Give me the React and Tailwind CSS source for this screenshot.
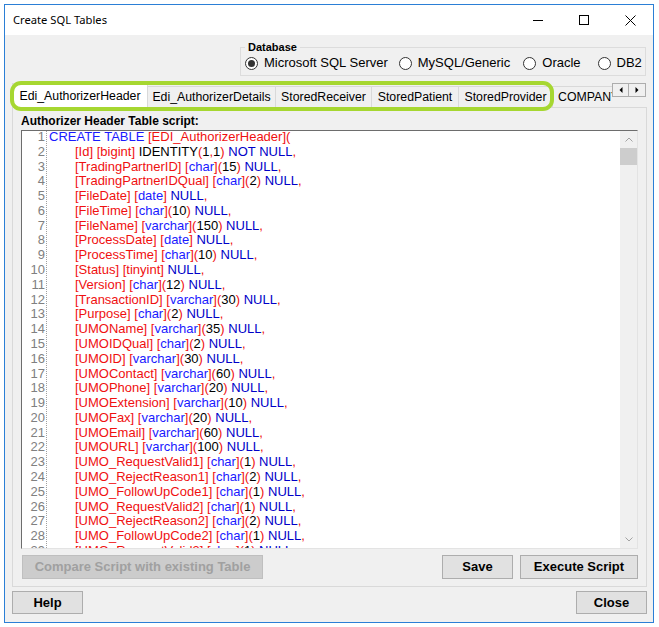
import React from "react";

const LINES = [
  "CREATE TABLE [EDI_AuthorizerHeader](",
  "\t[Id] [bigint] IDENTITY(1,1) NOT NULL,",
  "\t[TradingPartnerID] [char](15) NULL,",
  "\t[TradingPartnerIDQual] [char](2) NULL,",
  "\t[FileDate] [date] NULL,",
  "\t[FileTime] [char](10) NULL,",
  "\t[FileName] [varchar](150) NULL,",
  "\t[ProcessDate] [date] NULL,",
  "\t[ProcessTime] [char](10) NULL,",
  "\t[Status] [tinyint] NULL,",
  "\t[Version] [char](12) NULL,",
  "\t[TransactionID] [varchar](30) NULL,",
  "\t[Purpose] [char](2) NULL,",
  "\t[UMOName] [varchar](35) NULL,",
  "\t[UMOIDQual] [char](2) NULL,",
  "\t[UMOID] [varchar](30) NULL,",
  "\t[UMOContact] [varchar](60) NULL,",
  "\t[UMOPhone] [varchar](20) NULL,",
  "\t[UMOExtension] [varchar](10) NULL,",
  "\t[UMOFax] [varchar](20) NULL,",
  "\t[UMOEmail] [varchar](60) NULL,",
  "\t[UMOURL] [varchar](100) NULL,",
  "\t[UMO_RequestValid1] [char](1) NULL,",
  "\t[UMO_RejectReason1] [char](2) NULL,",
  "\t[UMO_FollowUpCode1] [char](1) NULL,",
  "\t[UMO_RequestValid2] [char](1) NULL,",
  "\t[UMO_RejectReason2] [char](2) NULL,",
  "\t[UMO_FollowUpCode2] [char](1) NULL,",
  "\t[UMO_RequestValid3] [char](1) NULL,",
];

const TYPES = new Set(["char", "varchar", "date"]);
const KW1 = new Set(["CREATE", "TABLE"]);
const KW2 = new Set(["NOT", "NULL"]);

const COLORS = {
  r: "text-[#f01010]",
  t: "text-[#1a1aff]",
  n: "text-[#0000c8]",
  k: "text-black",
};

function tokenize(s) {
  const out = [];
  const re = /\[[^\]]*\]|[(),]|\d+|[A-Za-z_]+|\s+/g;
  let m;
  while ((m = re.exec(s))) {
    const t = m[0];
    if (t[0] === "[") {
      const w = t.slice(1, -1);
      if (TYPES.has(w)) {
        out.push(["r", "["], ["t", w], ["r", "]"]);
      } else out.push(["r", t]);
    } else if (/^[(),]$/.test(t)) out.push(["r", t]);
    else if (KW1.has(t)) out.push(["t", t]);
    else if (KW2.has(t)) out.push(["n", t]);
    else out.push(["k", t]);
  }
  return out;
}

function Radio({ checked, label, className = "" }) {
  return (
    <div className={"flex items-center " + className}>
      <div className="w-[13px] h-[13px] rounded-full border border-[#333333] bg-white flex items-center justify-center">
        {checked && <div className="w-[7px] h-[7px] rounded-full bg-[#333333]" />}
      </div>
      <span className="ml-[6px] text-[13px] leading-[16px] text-black">{label}</span>
    </div>
  );
}

function Tab({ label, w, selected }) {
  return selected ? (
    <div
      className={
        "h-[25px] shrink-0 bg-white border-l border-t border-r border-[#d9d9d9] -mb-[1px] relative z-10 flex items-center justify-center text-[12.3px] text-black " +
        w
      }
    >
      {label}
    </div>
  ) : (
    <div
      className={
        "h-[21px] shrink-0 bg-[#f0f0f0] border-t border-r border-[#d9d9d9] flex items-center justify-center text-[12.3px] text-black whitespace-nowrap " +
        w
      }
    >
      {label}
    </div>
  );
}

function Btn({ children, w, disabled }) {
  return (
    <div
      className={
        "h-[24px] flex items-center justify-center text-[13px] font-bold border " +
        (disabled
          ? "bg-[#cccccc] border-[#bfbfbf] text-[#a0a0a0] "
          : "bg-[#e1e1e1] border-[#adadad] text-black ") +
        w
      }
    >
      {children}
    </div>
  );
}

export default function App() {
  return (
    <div
      className="w-[659px] h-[627px] bg-white pt-[4px] pl-[4px] overflow-hidden"
      style={{ fontFamily: '"Liberation Sans", Arial, sans-serif' }}
    >
      <div className="w-[650px] h-[619px] border border-[#2b7fd6] flex flex-col">
        {/* Title bar */}
        <div className="h-[30px] bg-white flex items-center shrink-0">
          <span
            className="pl-[8px] text-[11.2px] text-black flex-1"
            style={{ fontFamily: '"Segoe UI", "Noto Sans", sans-serif' }}
          >
            Create SQL Tables
          </span>
          <div className="flex h-full">
            <div className="w-[46px] h-full flex items-center justify-center">
              <svg width="10" height="10" viewBox="0 0 10 10">
                <line x1="0" y1="5.5" x2="10" y2="5.5" stroke="#000" strokeWidth="1" />
              </svg>
            </div>
            <div className="w-[46px] h-full flex items-center justify-center">
              <svg width="10" height="10" viewBox="0 0 10 10">
                <rect x="0.5" y="0.5" width="9" height="9" fill="none" stroke="#000" strokeWidth="1" />
              </svg>
            </div>
            <div className="w-[46px] h-full flex items-center justify-center">
              <svg width="11" height="11" viewBox="0 0 11 11">
                <line x1="0.5" y1="0.5" x2="10.5" y2="10.5" stroke="#000" strokeWidth="1" />
                <line x1="10.5" y1="0.5" x2="0.5" y2="10.5" stroke="#000" strokeWidth="1" />
              </svg>
            </div>
          </div>
        </div>

        {/* Body */}
        <div className="flex-1 bg-[#f0f0f0] flex flex-col pl-[7px] pr-[6px]">
          {/* Database group */}
          <fieldset className="mt-[6px] self-end mr-[1px] w-[406px] h-[35px] border border-[#dcdcdc] pl-[4px]">
            <legend className="ml-[0px] px-[3px] text-[11px] leading-[13px] font-bold text-black">
              Database
            </legend>
            <div className="flex items-center h-[16px] mt-[1px]">
              <Radio checked label="Microsoft SQL Server" />
              <Radio label="MySQL/Generic" className="ml-[11px]" />
              <Radio label="Oracle" className="ml-[13px]" />
              <Radio label="DB2" className="ml-[17px]" />
            </div>
          </fieldset>

          {/* Tab strip */}
          <div className="relative mt-[6px] h-[25px] flex items-end shrink-0">
            <div className="w-[600px] h-full flex items-end overflow-hidden">
              <Tab label="Edi_AuthorizerHeader" w="w-[136px]" selected />
              <Tab label="Edi_AuthorizerDetails" w="w-[128px]" />
              <Tab label="StoredReceiver" w="w-[96px]" />
              <Tab label="StoredPatient" w="w-[87px]" />
              <Tab label="StoredProvider" w="w-[94px]" />
              <div className="h-[21px] shrink-0 w-[120px] bg-[#f0f0f0] border-t border-[#d9d9d9] flex items-center pl-[5px] text-[12.3px] text-black whitespace-nowrap">
                COMPANY
              </div>
            </div>
            <div className="self-start flex mt-[1px]">
              <div className="w-[17px] h-[14px] border border-[#adadad] bg-[#f0f0f0] flex items-center justify-center">
                <svg width="4" height="6" viewBox="0 0 4 6">
                  <polygon points="3.5,0 0.5,3 3.5,6" fill="#000" />
                </svg>
              </div>
              <div className="w-[17px] h-[14px] border border-l-0 border-[#adadad] bg-[#f0f0f0] flex items-center justify-center">
                <svg width="4" height="6" viewBox="0 0 4 6">
                  <polygon points="0.5,0 3.5,3 0.5,6" fill="#000" />
                </svg>
              </div>
            </div>
            {/* green annotation outline */}
            <div className="absolute left-[-2px] top-[-1px] w-[544px] h-[30px] border-4 border-[#a6d731] rounded-[11px] pointer-events-none z-20" />
          </div>

          {/* Tab panel */}
          <div className="h-[480px] border border-[#d9d9d9] bg-[#f0f0f0] flex flex-col pl-[8px] pr-[8px] pt-[6px] shrink-0">
            <div className="text-[12px] leading-[14px] font-bold text-black">
              Authorizer Header Table script:
            </div>
            <div className="mt-[2px] w-[617px] h-[419px] bg-white border-t border-l border-[#6d6d6d] border-r border-b border-r-[#e3e3e3] border-b-[#e3e3e3] flex overflow-hidden">
              {/* gutter */}
              <div className="w-[25px] shrink-0 border-r border-dotted border-[#a0a0a0] flex flex-col items-end pr-[1px] -mt-[1px]">
                {LINES.map((_, i) => (
                  <div key={i} className="text-[13px] leading-[14.78px] text-[#808080]">
                    {i + 1}
                  </div>
                ))}
              </div>
              {/* code */}
              <div className="flex-1 pl-[2px] flex flex-col overflow-hidden -mt-[1px]">
                {LINES.map((line, i) => {
                  const indent = line.startsWith("\t");
                  const toks = tokenize(indent ? line.slice(1) : line);
                  return (
                    <div
                      key={i}
                      className={
                        "text-[13px] leading-[14.78px] whitespace-pre " +
                        (indent ? "pl-[26px]" : "")
                      }
                    >
                      {toks.map(([c, t], j) => (
                        <span key={j} className={COLORS[c]}>
                          {t}
                        </span>
                      ))}
                    </div>
                  );
                })}
              </div>
              {/* scrollbar */}
              <div className="w-[17px] shrink-0 bg-[#f0f0f0] flex flex-col">
                <div className="h-[17px] flex items-center justify-center">
                  <svg width="8" height="5" viewBox="0 0 8 5">
                    <polyline points="0.5,4.5 4,1 7.5,4.5" fill="none" stroke="#a3a3a3" strokeWidth="1" />
                  </svg>
                </div>
                <div className="h-[17px] bg-[#cdcdcd]" />
                <div className="flex-1" />
                <div className="h-[17px] flex items-center justify-center">
                  <svg width="8" height="5" viewBox="0 0 8 5">
                    <polyline points="0.5,0.5 4,4 7.5,0.5" fill="none" stroke="#a3a3a3" strokeWidth="1" />
                  </svg>
                </div>
              </div>
            </div>
            <div className="mt-[6px] flex items-center">
              <div className="ml-[1px]">
                <Btn w="w-[241px]" disabled>
                  Compare Script with existing Table
                </Btn>
              </div>
              <div className="flex-1" />
              <Btn w="w-[71px]">Save</Btn>
              <div className="ml-[7px] mr-[0px]">
                <Btn w="w-[118px]">Execute Script</Btn>
              </div>
            </div>
          </div>

          {/* bottom buttons */}
          <div className="mt-[4px] flex items-center justify-between">
            <div className="w-[71px] h-[23px] bg-[#e1e1e1] border border-[#adadad] flex items-center justify-center text-[13px] font-bold text-black">
              Help
            </div>
            <div className="w-[71px] h-[23px] bg-[#e1e1e1] border border-[#adadad] flex items-center justify-center text-[13px] font-bold text-black">
              Close
            </div>
          </div>
        </div>
      </div>
    </div>
  );
}
